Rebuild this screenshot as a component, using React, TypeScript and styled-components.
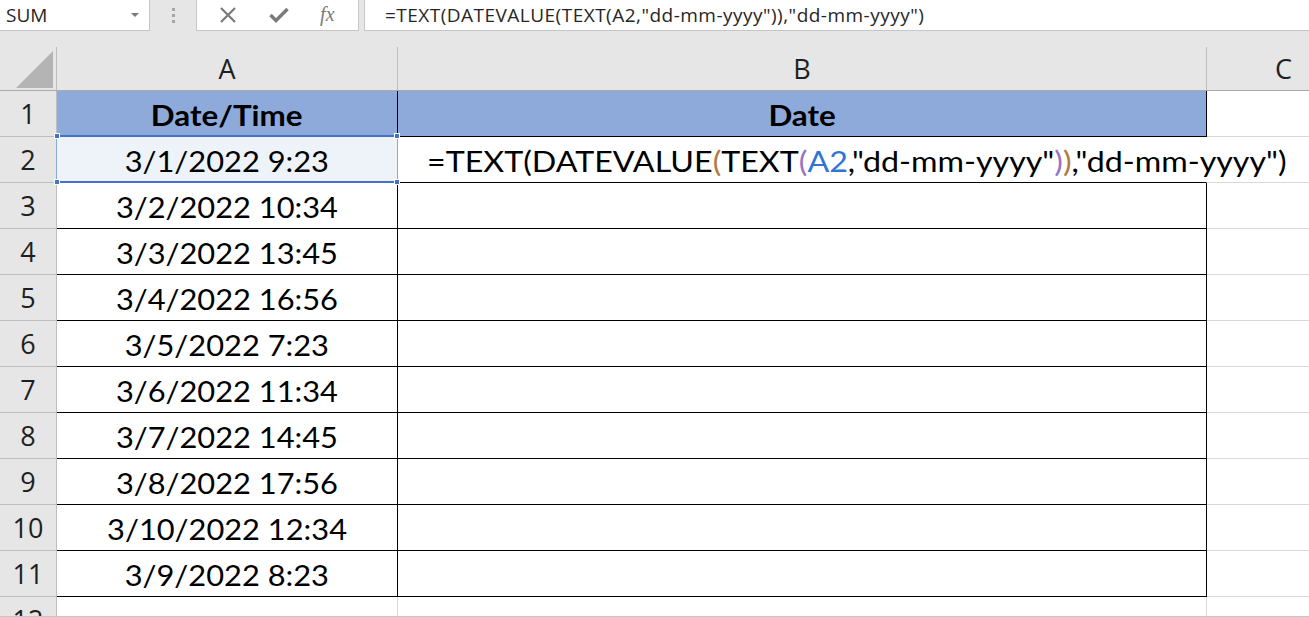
import React from "react";
import styled, { createGlobalStyle } from "styled-components";

const GlobalStyle = createGlobalStyle`
  html, body {
    margin: 0;
    padding: 0;
    background: #ffffff;
    overflow: hidden;
  }
  * {
    box-sizing: border-box;
  }
`;

const Window = styled.div`
  width: 1309px;
  height: 617px;
  display: flex;
  flex-direction: column;
  background: #e6e6e6;
  overflow: hidden;
`;

const FormulaBar = styled.div`
  display: flex;
  height: 31px;
  flex-shrink: 0;
`;

const NameBox = styled.div`
  width: 150px;
  display: flex;
  align-items: center;
  justify-content: space-between;
  padding: 0 10px 0 6px;
  background: #fff;
  border-right: 1px solid #c6c6c6;
  border-bottom: 1px solid #c6c6c6;
  font-family: "Open Sans", "Noto Sans", sans-serif;
  font-size: 19px;
  color: #262626;
`;

const DropArrow = styled.span`
  width: 0;
  height: 0;
  border-left: 4px solid transparent;
  border-right: 4px solid transparent;
  border-top: 4px solid #7a7a7a;
`;

const Grip = styled.div`
  width: 46px;
  display: flex;
  flex-direction: column;
  align-items: center;
  justify-content: center;
  gap: 3px;
  span {
    width: 3px;
    height: 3px;
    background: #a6a6a6;
  }
`;

const FnBox = styled.div`
  width: 163px;
  display: flex;
  align-items: center;
  justify-content: space-around;
  padding: 0 8px 0 6px;
  background: #fff;
  border: 1px solid #c6c6c6;
  border-top: none;
`;

const FxText = styled.span`
  font-family: "Liberation Serif", "DejaVu Serif", serif;
  font-style: italic;
  font-size: 20px;
  color: #7a7a7a;
  line-height: 1;
  margin-bottom: 2px;
`;

const FormulaInput = styled.div`
  flex: 1;
  margin-left: 5px;
  display: flex;
  align-items: center;
  padding-left: 20px;
  background: #fff;
  border-left: 1px solid #c6c6c6;
  border-bottom: 1px solid #c6c6c6;
  font-family: "Open Sans", "Noto Sans", sans-serif;
  font-size: 19px;
  letter-spacing: 0.48px;
  color: #262626;
  white-space: nowrap;
`;

const Spacer = styled.div`
  height: 16px;
  flex-shrink: 0;
`;

const COLS = "57px 341px 809px 154px";

const HeaderRow = styled.div`
  display: grid;
  grid-template-columns: ${COLS};
  height: 44px;
  flex-shrink: 0;
  border-bottom: 1px solid #ababab;
`;

const Corner = styled.div`
  border-right: 1px solid #bdbdbd;
  display: flex;
  align-items: flex-end;
  justify-content: flex-end;
  padding: 0 3px 2px 0;
`;

const ColHead = styled.div`
  border-right: 1px solid #bdbdbd;
  display: flex;
  align-items: center;
  justify-content: center;
  font-family: "Open Sans", "Noto Sans", sans-serif;
  font-size: 27px;
  color: #1f1f1f;
`;

const Sheet = styled.div`
  flex: 1;
  display: grid;
  grid-template-columns: ${COLS};
  grid-auto-rows: 46px;
  background: #fff;
  overflow: hidden;
  border-bottom: 1px solid #c6c6c6;
`;

const RowHead = styled.div`
  background: #e6e6e6;
  border-right: 1px solid #bdbdbd;
  border-bottom: 1px solid #bdbdbd;
  display: flex;
  align-items: center;
  justify-content: center;
  font-family: "Open Sans", "Noto Sans", sans-serif;
  font-size: 27px;
  color: #1f1f1f;
`;

const Cell = styled.div<{
  $fill?: string;
  $right?: string;
  $bottom?: string;
  $left?: boolean;
}>`
  position: relative;
  min-width: 0;
  display: flex;
  align-items: center;
  justify-content: ${(p) => (p.$left ? "flex-start" : "center")};
  padding-left: ${(p) => (p.$left ? "29px" : "0")};
  padding-top: 3px;
  background: ${(p) => p.$fill ?? "transparent"};
  border-right: 1px solid ${(p) => p.$right ?? "#d9d9d9"};
  border-bottom: 1px solid ${(p) => p.$bottom ?? "#d9d9d9"};
  white-space: nowrap;
  overflow: visible;
`;

const CellText = styled.span<{ $bold?: boolean; $left?: boolean; $sx: number }>`
  display: inline-block;
  font-family: Lato, "Open Sans", sans-serif;
  font-size: 28px;
  font-weight: ${(p) => (p.$bold ? 700 : 400)};
  color: #000;
  transform: scaleX(${(p) => p.$sx});
  transform-origin: ${(p) => (p.$left ? "left center" : "center")};
`;

const Tok = styled.span<{ $c: string }>`
  color: ${(p) => p.$c};
`;

const Selection = styled.div`
  position: absolute;
  top: -2px;
  left: -1px;
  right: -1px;
  bottom: -1px;
  border-top: 2px solid #4472c4;
  border-bottom: 2px solid #4472c4;
  border-left: 1px solid #8eaadb;
  border-right: 1px solid #8eaadb;
  z-index: 2;
  pointer-events: none;
`;

const Handle = styled.span<{ $top: boolean; $left: boolean }>`
  position: absolute;
  width: 6px;
  height: 6px;
  background: #4472c4;
  border: 1px solid #fff;
  ${(p) => (p.$top ? "top: -4px;" : "bottom: -4px;")}
  ${(p) => (p.$left ? "left: -3px;" : "right: -3px;")}
`;

const BLUE = "#8eaadb";
const BLACK = "#000";

const dates = [
  "3/1/2022 9:23",
  "3/2/2022 10:34",
  "3/3/2022 13:45",
  "3/4/2022 16:56",
  "3/5/2022 7:23",
  "3/6/2022 11:34",
  "3/7/2022 14:45",
  "3/8/2022 17:56",
  "3/10/2022 12:34",
  "3/9/2022 8:23",
];

const formula = '=TEXT(DATEVALUE(TEXT(A2,"dd-mm-yyyy")),"dd-mm-yyyy")';

function XIcon() {
  return (
    <svg width="20" height="18" viewBox="0 0 20 18">
      <path d="M3 2 L17 16 M17 2 L3 16" stroke="#7a7a7a" strokeWidth="2.2" fill="none" />
    </svg>
  );
}

function CheckIcon() {
  return (
    <svg width="20" height="18" viewBox="0 0 20 18">
      <path d="M1.5 9 L7 14.5 L18.5 3" stroke="#7a7a7a" strokeWidth="3.4" fill="none" />
    </svg>
  );
}

function CornerTriangle() {
  return (
    <svg width="37" height="37" viewBox="0 0 37 37">
      <polygon points="37,0 37,37 0,37" fill="#b4b4b4" />
    </svg>
  );
}

function SelectionBox() {
  return (
    <Selection>
      <Handle $top $left />
      <Handle $top $left={false} />
      <Handle $top={false} $left />
      <Handle $top={false} $left={false} />
    </Selection>
  );
}

function ColoredFormula() {
  return (
    <CellText $left $sx={1.15}>
      =TEXT(DATEVALUE<Tok $c="#b4773f">(</Tok>TEXT<Tok $c="#9474c4">(</Tok>
      <Tok $c="#2f75d6">A2</Tok>,"dd-mm-yyyy"<Tok $c="#9474c4">)</Tok>
      <Tok $c="#b4773f">)</Tok>,"dd-mm-yyyy")
    </CellText>
  );
}

export default function App() {
  return (
    <>
      <GlobalStyle />
      <Window>
        <FormulaBar>
          <NameBox>
            SUM
            <DropArrow />
          </NameBox>
          <Grip>
            <span />
            <span />
            <span />
          </Grip>
          <FnBox>
            <XIcon />
            <CheckIcon />
            <FxText>fx</FxText>
          </FnBox>
          <FormulaInput>{formula}</FormulaInput>
        </FormulaBar>
        <Spacer />
        <HeaderRow>
          <Corner>
            <CornerTriangle />
          </Corner>
          <ColHead>A</ColHead>
          <ColHead>B</ColHead>
          <ColHead>C</ColHead>
        </HeaderRow>
        <Sheet>
          <RowHead>1</RowHead>
          <Cell $fill={BLUE} $right={BLACK} $bottom={BLACK}>
            <CellText $bold $sx={1.12}>Date/Time</CellText>
          </Cell>
          <Cell $fill={BLUE} $right={BLACK} $bottom={BLACK}>
            <CellText $bold $sx={1.12}>Date</CellText>
          </Cell>
          <Cell />

          {dates.map((d, i) => {
            const row = i + 2;
            const isActive = row === 2;
            return (
              <React.Fragment key={d}>
                <RowHead>{row}</RowHead>
                <Cell
                  $fill={isActive ? "#eef3fa" : "#fff"}
                  $right={BLACK}
                  $bottom={BLACK}
                >
                  <CellText $sx={1.1}>{d}</CellText>
                  {isActive && <SelectionBox />}
                </Cell>
                <Cell
                  $fill="#fff"
                  $right={isActive ? "transparent" : BLACK}
                  $bottom={BLACK}
                  $left={isActive}
                  style={isActive ? { zIndex: 1 } : undefined}
                >
                  {isActive && <ColoredFormula />}
                </Cell>
                <Cell />
              </React.Fragment>
            );
          })}

          <RowHead>12</RowHead>
          <Cell />
          <Cell />
          <Cell />
        </Sheet>
      </Window>
    </>
  );
}
